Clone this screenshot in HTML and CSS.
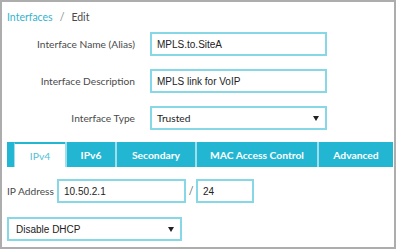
FILE: index.html
```html
<!DOCTYPE html>
<html>
<head>
<meta charset="utf-8">
<link rel="stylesheet" href="styles.css">
</head>
<body>
<div class="frame">
  <div class="crumbs"><a class="crumb-link">Interfaces</a><span class="crumb-sep">/</span><span class="crumb-cur">Edit</span></div>
  <div class="form">
    <div class="row">
      <label class="lbl">Interface Name (Alias)</label>
      <div class="field"><span class="val">MPLS.to.SiteA</span></div>
    </div>
    <div class="row">
      <label class="lbl">Interface Description</label>
      <div class="field"><span class="val">MPLS link for VoIP</span></div>
    </div>
    <div class="row">
      <label class="lbl">Interface Type</label>
      <div class="field select"><span class="val lato">Trusted</span><span class="caret"></span></div>
    </div>
  </div>
  <div class="tabs">
    <div class="tab-lead"></div>
    <div class="tab active w1">IPv4</div>
    <div class="tab w2">IPv6</div>
    <div class="tab w3">Secondary</div>
    <div class="tab w4">MAC Access Control</div>
    <div class="tab w5">Advanced</div>
  </div>
  <div class="ip-row">
    <span class="ip-lbl">IP Address</span>
    <div class="field ip"><span class="val">10.50.2.1</span></div>
    <span class="slash">/</span>
    <div class="field mask"><span class="val">24</span></div>
  </div>
  <div class="dhcp-row">
    <div class="field select dhcp"><span class="val">Disable DHCP</span><span class="caret"></span></div>
  </div>
</div>
</body>
</html>
```
FILE: styles.css
```css
html, body { margin: 0; padding: 0; background: #fff; }
.frame {
  box-sizing: border-box;
  width: 396px;
  height: 249px;
  border: 2px solid #adadad;
  padding: 0 0 0 5px;
  font-family: Lato, "Open Sans", sans-serif;
  color: #4a4a4a;
  overflow: hidden;
}
.crumbs {
  height: 30px;
  display: flex;
  align-items: center;
  font-size: 10.5px;
}
.crumb-link { color: #35b3cd; }
.crumb-sep { color: #888; margin: 0 7px; }
.crumb-cur { color: #4a4a4a; }
.form { display: flex; flex-direction: column; gap: 13px; }
.row { display: flex; align-items: center; gap: 15px; }
.lbl { width: 128px; text-align: right; font-size: 10.2px; color: #4a4a4a; }
.field {
  box-sizing: border-box;
  height: 24px;
  border: 2px solid #86d8e6;
  display: flex;
  align-items: center;
  padding: 0 5px;
  font-family: "Liberation Sans", Arial, sans-serif;
  font-size: 10px;
  color: #222;
}
.row .field { width: 177px; }
.val { flex: 1; }
.lato { font-family: Lato, sans-serif; font-size: 10.2px; }
.caret {
  width: 0; height: 0;
  border-left: 3px solid transparent;
  border-right: 3px solid transparent;
  border-top: 5px solid #222;
  margin-right: 1px;
}
.tabs {
  margin-top: 12px;
  height: 25px;
  display: flex;
  background: #22b6d2;
  margin-right: 1px;
}
.tab-lead { width: 7px; }
.tab {
  box-sizing: border-box;
  border-left: 2px solid #9fdeea;
  display: flex;
  align-items: center;
  justify-content: center;
  color: #fff;
  font-weight: 700;
  font-size: 10.3px;
}
.tab.active {
  background: #fff;
  color: #4fbfd6;
  font-weight: 400;
  border-top: 2px solid #22b6d2;
  border-left: 1px solid #9fdeea;
}
.w1 { width: 51px; }
.w2 { width: 50px; }
.w3 { width: 80px; }
.w4 { width: 122px; }
.w5 { width: 76px; }
.ip-row { margin-top: 12px; display: flex; align-items: center; }
.ip-lbl { font-size: 10.2px; color: #4a4a4a; width: 50px; }
.field.ip { width: 129px; }
.slash { width: 10px; text-align: center; font-size: 10.5px; color: #666; }
.field.mask { width: 58px; }
.dhcp-row { margin-top: 14px; }
.field.dhcp { width: 175px; padding-left: 7px; }
```
